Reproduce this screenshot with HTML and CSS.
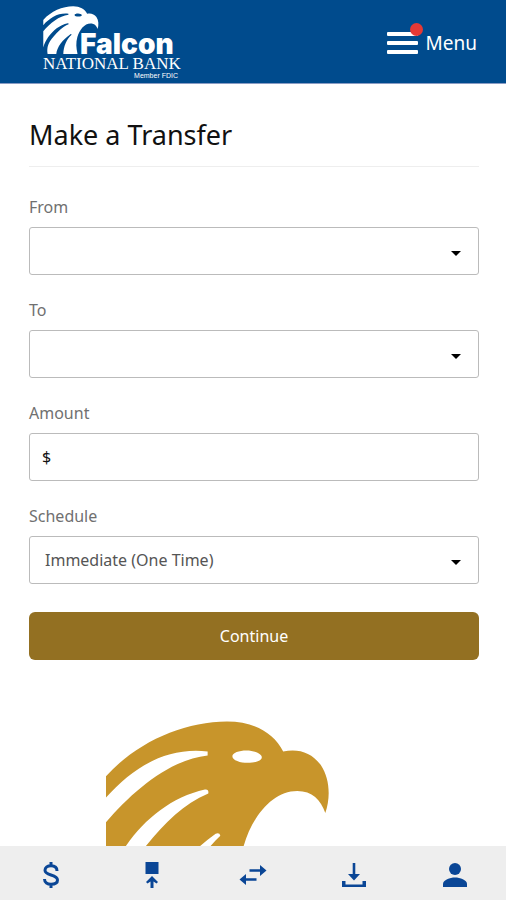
FILE: index.html
```html
<!DOCTYPE html>
<html lang="en">
<head>
    <meta charset="UTF-8">
    <meta name="viewport" content="width=device-width, initial-scale=1.0">
    <title>Falcon National Bank</title>
    <link rel="stylesheet" href="styles.css">
</head>
<body>
    <svg class="defs" aria-hidden="true">
        <symbol id="falcon" viewBox="48 60 670 580">
            <path fill-rule="evenodd" d="M48 228C140 126 280 64 410 64C490 64 550 98 578 154C624 144 664 158 690 194C718 236 720 292 704 338C690 298 665 272 620 272C545 272 485 350 460 436C440 505 446 570 462 640L290 640C292 545 330 460 390 406Q388 396 376 400C280 470 215 550 205 640L100 640C88 560 110 500 168 436C225 368 280 310 354 280Q356 266 344 268C245 290 165 355 108 436C78 480 60 520 48 560L48 366C130 270 240 178 352 166L352 154C230 140 130 200 48 292ZM426 168C426 158 446 151 468 151S514 160 514 171S494 188 472 188S426 180 426 168Z"/>
        </symbol>
    </svg>
    <div class="container">
        <header class="header">
            <a href="#" class="logo" aria-label="Falcon National Bank">
                <svg class="logo-bird"><use href="#falcon"/></svg>
                <span class="logo-name">Falcon</span>
                <span class="logo-bank">NATIONAL BANK</span>
                <span class="logo-fdic">Member FDIC</span>
            </a>
            <button class="menu-button" type="button">
                <span class="bars">
                    <span class="bar"></span>
                    <span class="bar"></span>
                    <span class="bar"></span>
                    <span class="dot"></span>
                </span>
                Menu
            </button>
        </header>
        <main class="content">
            <h1>Make a Transfer</h1>
            <form class="transfer-form">
                <div class="field">
                    <label for="from">From</label>
                    <select id="from">
                        <option></option>
                    </select>
                </div>
                <div class="field">
                    <label for="to">To</label>
                    <select id="to">
                        <option></option>
                    </select>
                </div>
                <div class="field">
                    <label for="amount">Amount</label>
                    <div class="amount-box">
                        <span class="currency">$</span>
                        <input type="text" id="amount" inputmode="decimal">
                    </div>
                </div>
                <div class="field">
                    <label for="schedule">Schedule</label>
                    <select id="schedule">
                        <option>Immediate (One Time)</option>
                    </select>
                </div>
                <button class="continue-button" type="button">Continue</button>
            </form>
            <div class="picture">
                <svg viewBox="0 0 296 200"><use href="#falcon" width="224" height="194"/></svg>
            </div>
        </main>
        <nav class="bottom-nav">
            <a href="#" aria-label="Accounts">
                <svg viewBox="0 0 28 28"><path class="line" d="M14 1v4M14 23v4M20 10C20 6.500 17.500 4.800 14 4.800S8 6.500 8 9.300C8 12 10.500 13 14 14S20.500 16 20.500 19S17.500 23.300 14 23.300S7.500 21.500 7.500 18"/></svg>
            </a>
            <a href="#" aria-label="Pay">
                <svg viewBox="0 0 28 28"><path d="M7.500 1h13v12h-13z"/><path d="M14 15l6 6-1.500 1.500-3-2V27h-3v-6.500l-3 2L8 21z"/></svg>
            </a>
            <a href="#" aria-label="Transfer">
                <svg viewBox="0 0 28 28"><path d="M10.500 8.200H21V4l6.500 5.500L21 15v-4.200H10.500zM17.500 17.200H7V13l-6.500 5.500L7 24v-4.200h10.500z"/></svg>
            </a>
            <a href="#" aria-label="Deposit">
                <svg viewBox="0 0 28 28"><path d="M12.700 2h2.600v11H20l-6 6.500L8 13h4.700z"/><path d="M2 20h3.500v3.400h17V20H26v6H2z"/></svg>
            </a>
            <a href="#" aria-label="Profile">
                <svg viewBox="0 0 28 28"><circle cx="14" cy="8" r="6"/><path d="M2 26v-3c0-4 7-6.500 12-6.500S26 19 26 23v3z"/></svg>
            </a>
        </nav>
    </div>
</body>
</html>
```
FILE: styles.css
```css
* {
    box-sizing: border-box;
}

body {
    margin: 0;
    font-family: "Noto Sans", sans-serif;
    font-size: 16px;
    color: #707070;
    background: #fff;
}

.defs {
    display: none;
}

.container {
    display: flex;
    flex-direction: column;
    height: 100vh;
}

.header {
    display: flex;
    justify-content: space-between;
    align-items: center;
    flex: none;
    height: 84px;
    padding: 2px 29px 0 43px;
    background: #004b8d;
    border-bottom: 1px solid #8a9cc4;
}

.logo {
    display: grid;
    grid-template-columns: 37px 98px;
    grid-template-rows: 50px 16px 8px;
    color: #fff;
    text-decoration: none;
}

.logo-bird {
    grid-area: 1 / 1;
    width: 56px;
    height: 48px;
    fill: #fff;
}

.logo-name {
    grid-area: 1 / 2;
    align-self: end;
    font: 900 28px/24px Inter, "Liberation Sans", sans-serif;
}

.logo-bank {
    grid-area: 2 / 1 / 3 / 3;
    font: 17px/16px "Liberation Serif", "Times New Roman", serif;
    white-space: nowrap;
}

.logo-fdic {
    grid-area: 3 / 1 / 4 / 3;
    justify-self: end;
    font: 7px/8px "Liberation Sans", Arial, sans-serif;
}

.menu-button {
    display: flex;
    align-items: center;
    gap: 8px;
    padding: 0;
    border: none;
    background: none;
    color: #fff;
    font: 19px/28px "Noto Sans", sans-serif;
    cursor: pointer;
}

.bars {
    position: relative;
    display: grid;
    gap: 5px;
    width: 31px;
}

.bar {
    height: 4px;
    background: #fff;
    border-radius: 1px;
}

.dot {
    position: absolute;
    top: -9px;
    right: -5px;
    width: 13px;
    height: 13px;
    border-radius: 50%;
    background: #e53935;
}

.content {
    flex: 1;
    min-height: 0;
    padding: 30px 27px 0 29px;
    overflow-y: auto;
    scrollbar-width: none;
}

h1 {
    margin: 0 0 28px;
    padding-bottom: 10px;
    border-bottom: 1px solid #eee;
    color: #111;
    font-size: 27px;
    font-weight: 400;
    line-height: 42px;
}

.field {
    display: flex;
    flex-direction: column;
    gap: 8px;
    margin-bottom: 23px;
}

.field label {
    font-size: 16px;
    line-height: 24px;
}

.field select, .amount-box {
    width: 100%;
    height: 48px;
    border: 1px solid #bbb;
    border-radius: 3px;
    background: #fff;
}

.field select {
    appearance: none;
    padding: 0 40px 0 15px;
    color: #555;
    font: 16px/24px "Noto Sans", sans-serif;
    background: url('data:image/svg+xml,<svg xmlns="http://www.w3.org/2000/svg" viewBox="0 0 10 5"><path d="M0 0h10L5 5z"/></svg>') no-repeat right 17px top 23px / 10px 5px #fff;
}

.amount-box {
    display: flex;
    align-items: center;
    padding: 0 12px;
}

.currency {
    color: #111;
}

.amount-box input {
    flex: 1;
    min-width: 0;
    border: none;
    outline: none;
    background: none;
    font: 16px/24px "Noto Sans", sans-serif;
}

.continue-button {
    display: block;
    width: 100%;
    height: 48px;
    margin-top: 28px;
    border: none;
    border-radius: 6px;
    background: #937022;
    color: #fff;
    font: 16px/24px "Noto Sans", sans-serif;
    cursor: pointer;
}

.picture {
    display: flex;
    justify-content: center;
    margin-top: 60px;
}

.picture svg {
    width: 296px;
    height: 200px;
    fill: #c8952b;
}

.bottom-nav {
    display: grid;
    grid-template-columns: repeat(5, 1fr);
    align-items: center;
    flex: none;
    height: 54px;
    padding-top: 4px;
    background: #eee;
}

.bottom-nav a {
    display: flex;
    justify-content: center;
}

.bottom-nav svg {
    width: 28px;
    height: 28px;
    fill: #0a4696;
}

.bottom-nav .line {
    fill: none;
    stroke: #0a4696;
    stroke-width: 3;
}
```
